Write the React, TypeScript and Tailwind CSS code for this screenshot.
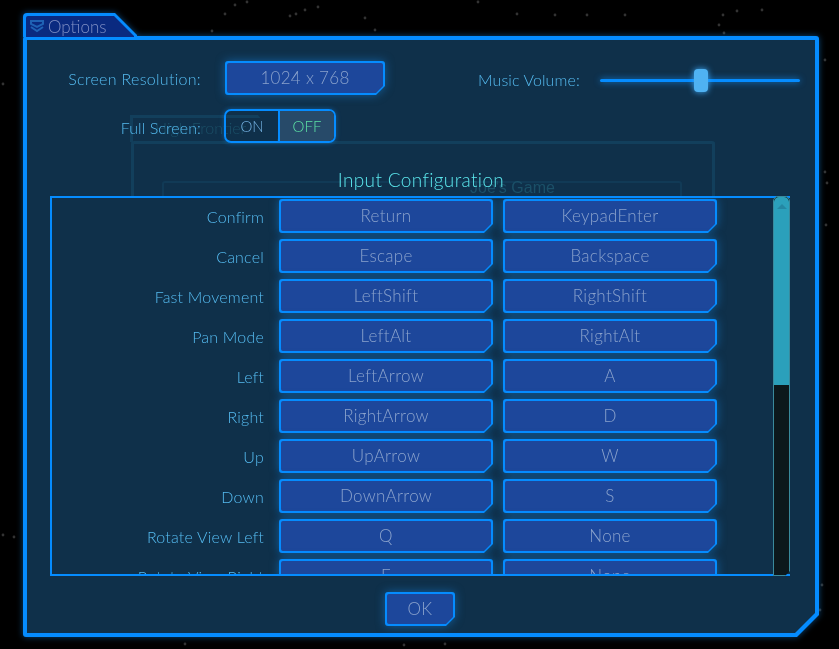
const stars = [
  [225, 14], [235, 5], [247, 2], [212, 31], [296, 14], [305, 10], [318, 7], [290, 16], [365, 18], [375, 30],
  [478, 2], [517, 14], [555, 15], [587, 15], [625, 15], [723, 15], [719, 25], [737, 11], [762, 10], [724, 33],
  [825, 60], [825, 172], [827, 183], [826, 225], [3, 84], [14, 537], [3, 535], [185, 644], [404, 645], [445, 644],
  [820, 610], [822, 585],
];

const rows = [
  ['Confirm', 'Return', 'KeypadEnter'],
  ['Cancel', 'Escape', 'Backspace'],
  ['Fast Movement', 'LeftShift', 'RightShift'],
  ['Pan Mode', 'LeftAlt', 'RightAlt'],
  ['Left', 'LeftArrow', 'A'],
  ['Right', 'RightArrow', 'D'],
  ['Up', 'UpArrow', 'W'],
  ['Down', 'DownArrow', 'S'],
  ['Rotate View Left', 'Q', 'None'],
  ['Rotate View Right', 'E', 'None'],
];

function Btn({ className, children }: { className: string; children: React.ReactNode }) {
  return (
    <div className={`shrink-0 drop-shadow-[0_0_5px_rgba(20,140,240,0.5)] ${className}`}>
      <div className="h-full rounded-[3px] bg-[#058cff] p-[2px] [clip-path:polygon(0_0,100%_0,100%_calc(100%-9px),calc(100%-9px)_100%,0_100%)]">
        <div className="flex h-full items-center justify-center rounded-[2px] bg-[#1d479b] pb-px text-[17px] tracking-[0.3px] text-[#8aa2cc] [clip-path:polygon(0_0,100%_0,100%_calc(100%-7px),calc(100%-7px)_100%,0_100%)]">
          {children}
        </div>
      </div>
    </div>
  );
}

export default function App() {
  return (
    <div className="relative h-[649px] w-[839px] overflow-hidden bg-black pl-[23px] pt-[13px] font-[Lato,sans-serif] font-light">
      <svg className="absolute left-0 top-0" width="839" height="649">
        {stars.map(([x, y], i) => (
          <circle key={i} cx={x} cy={y} r="1.4" fill="#333333" />
        ))}
      </svg>

      <div className="relative h-[624px] w-[796px] drop-shadow-[0_0_3px_rgba(20,140,240,0.5)]">
        {/* tab */}
        <div className="relative z-10 -mb-px h-[24px] w-[114px] rounded-tl-[4px] bg-[#058cff] px-[3px] pt-[3px] [clip-path:polygon(0_0,calc(100%-22px)_0,100%_22px,100%_100%,0_100%)]">
          <div className="flex h-full items-center rounded-tl-[2px] bg-[#0a2a80] pl-1 [clip-path:polygon(0_0,calc(100%-20px)_0,100%_20px,100%_100%,0_100%)]">
            <svg width="14" height="13" viewBox="0 0 14 13" fill="none" stroke="#1f62b4" strokeWidth="2">
              <path d="M1 1h12v3l-6 3-6-3z" />
              <path d="M1 7l6 4 6-4" />
            </svg>
            <span className="ml-[4px] text-[17px] leading-none text-[#7f8fc4]">Options</span>
          </div>
        </div>

        {/* window */}
        <div className="h-[601px] rounded-[3px] bg-[#058cff] p-[4px] [clip-path:polygon(0_0,100%_0,100%_calc(100%-22px),calc(100%-22px)_100%,0_100%)]">
          <div className="relative h-full bg-[#0f304a] [clip-path:polygon(0_0,100%_0,100%_calc(100%-20px),calc(100%-20px)_100%,0_100%)]">
            {/* dialog left open behind this one */}
            <div className="absolute left-[104px] top-[101px] h-[60px] w-[584px] rounded-[3px] border-[3px] border-b-0 border-[#123f5c]">
              <div className="absolute left-[28px] top-[37px] h-[20px] w-[520px] rounded-t-[3px] border-2 border-b-0 border-[#113a56]" />
              <div className="absolute left-[336px] top-[36px] font-[Liberation_Sans,sans-serif] text-[16px] font-normal leading-none text-[#1b5068]">
                Joe's Game
              </div>
            </div>
            <div className="absolute left-[103px] top-[75px] h-[27px] w-[150px] border-[3px] border-b-0 border-[#123f5c] [clip-path:polygon(0_0,calc(100%-22px)_0,100%_100%,0_100%)]">
              <span className="absolute left-[22px] top-[2px] text-[16px] leading-none text-[#1b5068]">High Frontier</span>
            </div>

            <div className="relative flex h-full flex-col pt-[21px]">
              <div className="flex items-center">
                <div className="w-[174px] pt-[1px] text-right text-[16px] tracking-[0.3px] text-[#55bbf0]">Screen Resolution:</div>
                <Btn className="ml-[24px] h-[34px] w-[160px]">1024 x 768</Btn>
                <div className="ml-[93px] w-[102px] pt-[3px] text-[16px] tracking-[0.1px] whitespace-nowrap text-[#55bbf0]">Music Volume:</div>
                <div className="relative ml-[20px] mt-[4px] h-[3px] w-[200px] rounded-full bg-[#058cff] shadow-[0_0_6px_rgba(20,140,240,0.9)]">
                  <div className="absolute left-[94px] top-[-10px] h-[23px] w-[14px] rounded-[4px] bg-[#4fb2f2] shadow-[0_0_6px_rgba(60,170,250,1)]" />
                </div>
              </div>

              <div className="mt-[14px] flex items-center">
                <div className="w-[174px] pt-[3px] text-right text-[16px] tracking-[0.1px] text-[#55bbf0]">Full Screen:</div>
                <div className="ml-[23px] flex h-[34px] w-[112px] overflow-hidden rounded-[7px] border-2 border-[#058cff] text-[15px] shadow-[0_0_5px_rgba(20,140,240,0.45)]">
                  <div className="flex w-[52px] items-center justify-center text-[#72b0e0]">ON</div>
                  <div className="flex flex-1 items-center justify-center border-l-2 border-[#058cff] bg-[#274a69] text-[#5ce0a4]">OFF</div>
                </div>
              </div>

              <div className="mt-[24px] h-[29px] text-center text-[19px] leading-[26px] tracking-[0.35px] text-[#5ce8ee]">Input Configuration</div>

              <div className="relative ml-[23px] h-[380px] w-[740px] border-2 border-r-0 border-[#058cff] bg-[#0f304a]">
                <div className="h-full overflow-hidden">
                  <div className="flex flex-col gap-[6px] pt-px">
                    {rows.map(([label, a, b]) => (
                      <div key={label} className="flex items-center">
                        <div className="w-[212px] pt-[1px] text-right text-[16px] tracking-[0.2px] text-[#55bbf0]">{label}</div>
                        <Btn className="ml-[15px] h-[34px] w-[214px]">{a}</Btn>
                        <Btn className="ml-[10px] h-[34px] w-[214px]">{b}</Btn>
                      </div>
                    ))}
                  </div>
                </div>
                {/* scrollbar */}
                <div className="absolute bottom-[-2px] right-0 top-[-2px] w-[17px] overflow-hidden rounded-t-[5px] border border-[#3a8a9c] bg-[#0c181c] [clip-path:polygon(0_0,100%_0,100%_calc(100%-5px),calc(100%-5px)_100%,0_100%)]">
                  <div className="flex h-[188px] justify-center rounded-t-[5px] bg-[#2ba0bb] pt-[7px]">
                    <div className="h-0 w-0 border-x-[5px] border-b-[5px] border-x-transparent border-b-[#2487a3]" />
                  </div>
                </div>
              </div>

              <div className="mt-[16px] flex justify-center pr-[2px]">
                <Btn className="h-[34px] w-[70px]">OK</Btn>
              </div>
            </div>
          </div>
        </div>
      </div>
    </div>
  );
}
